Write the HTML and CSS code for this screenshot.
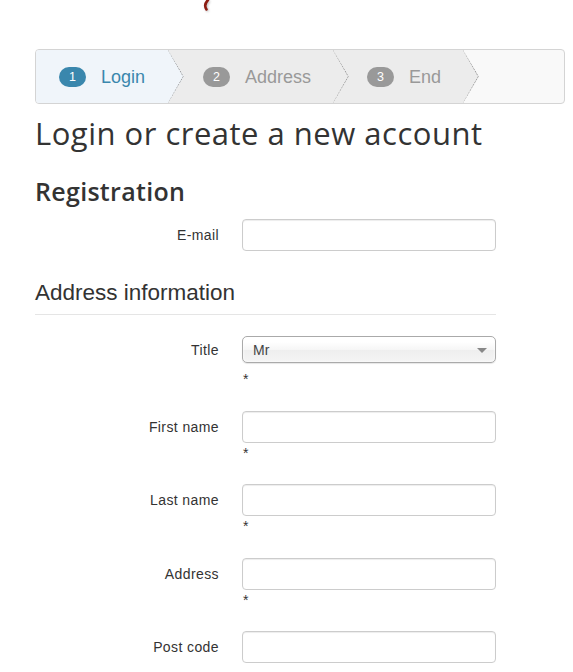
FILE: index.html
```html
<!DOCTYPE html>
<html>
<head>
<meta charset="utf-8">
<link rel="stylesheet" href="styles.css">
</head>
<body>
<div class="topbar">
  <svg class="logo-bit" width="14" height="14" viewBox="0 0 14 14"><path d="M8 0 C5 3 4.5 6.5 6.5 9.5" fill="none" stroke="#8c1c12" stroke-width="2.6" stroke-linecap="round"/></svg>
</div>
<div class="page">
  <div class="wizard">
    <div class="step step-1 active">
      <span class="badge">1</span><span class="step-label">Login</span>
      <svg class="chev" viewBox="0 0 16 53" preserveAspectRatio="none"><polyline points="0.3,0 15.3,26.5 0.3,53" fill="none" stroke="#9a9a9a" stroke-width="1" stroke-dasharray="2 1"/></svg>
    </div>
    <div class="step step-2">
      <span class="badge">2</span><span class="step-label">Address</span>
      <svg class="chev" viewBox="0 0 16 53" preserveAspectRatio="none"><polyline points="0.3,0 15.3,26.5 0.3,53" fill="none" stroke="#9a9a9a" stroke-width="1" stroke-dasharray="2 1"/></svg>
    </div>
    <div class="step step-3">
      <span class="badge">3</span><span class="step-label">End</span>
      <svg class="chev" viewBox="0 0 16 53" preserveAspectRatio="none"><polyline points="0.3,0 15.3,26.5 0.3,53" fill="none" stroke="#9a9a9a" stroke-width="1" stroke-dasharray="2 1"/></svg>
    </div>
  </div>

  <h1 class="title">Login or create a new account</h1>
  <h2 class="subtitle">Registration</h2>

  <div class="form">
    <div class="row row-email">
      <label class="lbl">E-mail</label>
      <div class="ctrl"><input class="field" type="text"></div>
    </div>

    <div class="legend">Address information</div>

    <div class="row">
      <label class="lbl lbl-select">Title</label>
      <div class="ctrl">
        <div class="select"><span>Mr</span><i class="caret"></i></div>
        <div class="req">*</div>
      </div>
    </div>
    <div class="row">
      <label class="lbl">First name</label>
      <div class="ctrl"><input class="field" type="text"><div class="req">*</div></div>
    </div>
    <div class="row">
      <label class="lbl">Last name</label>
      <div class="ctrl"><input class="field" type="text"><div class="req">*</div></div>
    </div>
    <div class="row">
      <label class="lbl">Address</label>
      <div class="ctrl"><input class="field" type="text"><div class="req">*</div></div>
    </div>
    <div class="row">
      <label class="lbl">Post code</label>
      <div class="ctrl"><input class="field" type="text"></div>
    </div>
  </div>
</div>
</body>
</html>
```

FILE: styles.css
```css
* { box-sizing: border-box; }
html, body { margin: 0; padding: 0; background: #fff; }
body {
  font-family: "Liberation Sans", Arial, sans-serif;
  font-size: 14px;
  color: #333;
  width: 573px;
  height: 672px;
  overflow: hidden;
}
.topbar {
  height: 49px;
  padding-left: 200px;
}
.logo-bit {
  display: block;
  filter: drop-shadow(1px 1px 1px rgba(0,0,0,0.25));
}
.page {
  padding-left: 35px;
}
.wizard {
  display: flex;
  width: 530px;
  height: 55px;
  border: 1px solid #d4d4d4;
  border-radius: 4px;
  background: #f9f9f9;
  overflow: hidden;
}
.step {
  position: relative;
  display: flex;
  align-items: center;
  height: 100%;
  padding-top: 1px;
  background: #ececec;
  clip-path: polygon(0 0, calc(100% - 16px) 0, 100% 50%, calc(100% - 16px) 100%, 0 100%);
}
.step-1 { width: 148px; padding-left: 23px; background: #f0f5fa; z-index: 3; }
.step-2 { width: 181px; padding-left: 35px; margin-left: -16px; z-index: 2; }
.step-3 { width: 146px; padding-left: 34px; margin-left: -16px; z-index: 1; }
.chev {
  position: absolute;
  right: 0;
  top: 0;
  width: 16px;
  height: 100%;
}
.badge {
  display: inline-block;
  height: 20px;
  line-height: 20px;
  padding: 0 10px;
  border-radius: 10px;
  background: #999;
  color: #fff;
  font-size: 12.5px;
}
.step-label {
  margin-left: 15px;
  font-size: 18px;
  color: #999;
}
.active .badge { background: #3a87ad; }
.active .step-label { color: #3a87ad; }

.title {
  font-family: "Open Sans", sans-serif;
  font-weight: 400;
  font-size: 31px;
  letter-spacing: 0.5px;
  line-height: 33px;
  margin: 13px 0 0 0;
  color: #333;
}
.subtitle {
  font-family: "Open Sans", sans-serif;
  font-weight: 600;
  font-size: 25px;
  letter-spacing: 0.3px;
  line-height: 27px;
  margin: 28px 0 0 0;
  color: #333;
}
.form {
  width: 461px;
  margin-top: 14px;
}
.row {
  display: grid;
  grid-template-columns: 184px 254px;
  column-gap: 23px;
  margin-bottom: 21.5px;
}
.row-email { margin-bottom: 0; }
.lbl {
  display: flex;
  align-items: center;
  justify-content: flex-end;
  height: 32px;
  letter-spacing: 0.4px;
}
.lbl-select { height: 28px; }
.field {
  display: block;
  width: 254px;
  height: 32px;
  margin: 0;
  border: 1px solid #ccc;
  border-radius: 4px;
  box-shadow: inset 0 1px 1px rgba(0,0,0,0.075);
  background: #fff;
  outline: none;
}
.req {
  height: 20px;
  line-height: 20px;
  padding-left: 1px;
  font-size: 14px;
}
.select {
  position: relative;
  display: flex;
  align-items: center;
  height: 27px;
  margin-bottom: 6px;
  padding-left: 10px;
  border: 1px solid #aaa;
  border-radius: 5px;
  background: linear-gradient(#fff 20%, #f6f6f6 50%, #eee 52%, #f4f4f4 100%);
  box-shadow: inset 0 0 3px #fff, 0 1px 1px rgba(0,0,0,0.1);
  color: #444;
}
.caret {
  position: absolute;
  right: 8px;
  top: 11px;
  width: 0;
  height: 0;
  border-left: 5px solid transparent;
  border-right: 5px solid transparent;
  border-top: 5px solid #888;
}
.legend {
  font-size: 22.5px;
  line-height: 26px;
  margin-top: 29px;
  padding-bottom: 8px;
  border-bottom: 1px solid #e5e5e5;
  margin-bottom: 21px;
}
```
